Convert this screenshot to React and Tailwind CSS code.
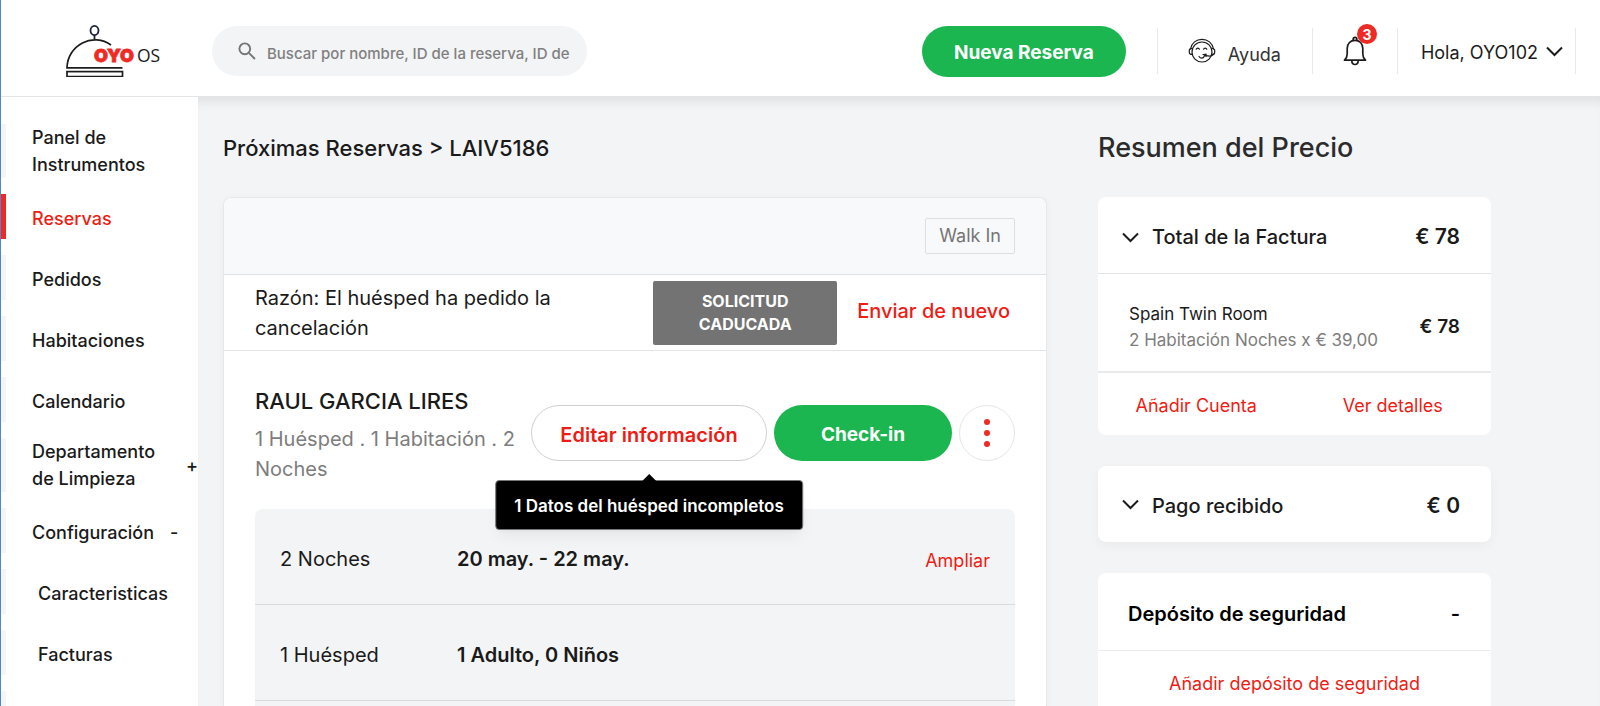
import React from "react";

const NAV_ITEMS = [
  { label: "Panel de Instrumentos", narrow: true },
  { label: "Reservas", active: true },
  { label: "Pedidos" },
  { label: "Habitaciones" },
  { label: "Calendario" },
  { label: "Departamento de Limpieza", narrow: true, toggle: "+" },
  { label: "Configuración", toggle: "-" },
  { label: "Caracteristicas", nested: true },
  { label: "Facturas", nested: true },
];

function Logo() {
  return (
    <svg width="96" height="56" viewBox="0 0 96 56" fill="none" role="img" aria-label="OYO OS">
      <ellipse cx="29.5" cy="9.5" rx="4" ry="4.6" stroke="#1b1f3a" strokeWidth="1.8" />
      <path d="M29.5 14v4" stroke="#1b1f3a" strokeWidth="1.8" />
      <path d="M57.500 46.800H2V46.500A28 28.500 0 0 1 46 24" stroke="#1c1c1c" strokeWidth="1.7" />
      <rect x="2" y="50.600" width="55.500" height="5" stroke="#1c1c1c" strokeWidth="1.7" />
      <text x="29" y="41" fill="#ee2a24" stroke="#ee2a24" strokeWidth="0.8" fontFamily="Inter, sans-serif" fontSize="18" fontWeight="900">OYO</text>
      <text x="72" y="41" fill="#1c1c1c" fontFamily='"Open Sans", sans-serif' fontSize="17.500">OS</text>
    </svg>
  );
}

function SearchIcon() {
  return (
    <svg width="18" height="18" viewBox="0 0 18 18" fill="none" stroke="#757575" strokeWidth="1.9" aria-hidden="true">
      <circle cx="6.800" cy="6.800" r="5.400" />
      <path d="M10.800 10.800L17 17" />
    </svg>
  );
}

function SupportIcon() {
  return (
    <svg width="28" height="26" viewBox="0 0 28 26" fill="none" stroke="#1c1c1c" strokeWidth="1.200" strokeLinecap="round" aria-hidden="true">
      <circle cx="14" cy="14" r="10" />
      <path d="M2.500 11C3.600 5 8.300 1.300 14 1.300S24.400 5 25.500 11" />
      <path d="M3.800 10.500C2 10.500 1.300 11.300 1.300 12.600v1.600c0 1.300.7 2.200 2.500 2.200M24.200 10.500c1.800 0 2.500.8 2.500 2.100v1.600c0 1.300-.7 2.200-2.500 2.200" />
      <path d="M8.200 11.200c.5-1.500 2.700-1.500 3.200 0M15.600 11.200c.5-1.500 2.700-1.500 3.200 0" />
      <path d="M11 18.500c1.400 2.300 4.300 2.200 5.300-.2M26 16c-1.400 2.200-4.600 2.400-8 1.600" />
      <path d="M15.600 16.600l2.400-.3v1.900z" fill="#1c1c1c" />
    </svg>
  );
}

function BellIcon() {
  return (
    <svg width="24" height="30" viewBox="0 0 24 30" fill="none" stroke="#1c1c1c" strokeWidth="1.700" strokeLinejoin="round" aria-hidden="true">
      <path d="M10.200 4.200V3c0-2.300 3.600-2.300 3.600 0v1.200" />
      <path d="M1.500 24.200c1.900-1.800 2.700-3.200 2.700-6.200v-5.500C4.200 7.500 7.500 4.300 12 4.300s7.800 3.200 7.800 8.200V18c0 3 .8 4.400 2.700 6.200z" />
      <path d="M8.800 24.500c0 5.300 6.400 5.300 6.400 0" />
    </svg>
  );
}

function Chevron() {
  return (
    <svg width="17" height="11" viewBox="0 0 17 11" fill="none" stroke="#1c1c1c" strokeWidth="2" aria-hidden="true">
      <path d="M1 1.500L8.500 9 16 1.500" />
    </svg>
  );
}

function Header() {
  return (
    <header className="flex h-[97px] items-center border-b border-[#e3e4e6] bg-white pt-1.5">
      <a href="#inicio" className="ml-16 shrink-0 pb-1">
        <Logo />
      </a>
      <label className="ml-[51px] flex h-[50px] w-[375px] items-center gap-[11px] rounded-full bg-[#f3f4f6] pr-2 pl-[26px]">
        <SearchIcon />
        <span className="sr-only">Buscar reservas</span>
        <input
          type="text"
          placeholder="Buscar por nombre, ID de la reserva, ID de"
          className="h-10 min-w-0 flex-1 bg-transparent pt-1 text-[15px] font-medium text-[#1c1c1c] outline-none placeholder:text-[#808080]"
        />
      </label>
      <button type="button" className="ml-auto h-[51px] w-[204px] rounded-full bg-[#1bb650] pt-1 text-[19px] font-bold text-white">
        Nueva Reserva
      </button>
      <div className="mr-6 ml-[31px] flex h-[46px] items-stretch divide-x divide-[#e8e8ea] border-x border-[#e8e8ea]">
        <a href="#ayuda" className="flex items-center gap-3 pr-[31px] pl-[30px] text-[18px] text-[#333]">
          <SupportIcon />
          <span className="pt-1.5">Ayuda</span>
        </a>
        <button type="button" aria-label="Notificaciones" className="flex w-[85px] items-center justify-center">
          <span className="relative">
            <BellIcon />
            <span className="absolute -top-3 left-3.5 flex size-5 items-center justify-center rounded-full bg-[#ee2a24] text-[14px] font-bold text-white">
              3
            </span>
          </span>
        </button>
        <button type="button" className="flex items-center gap-2 pr-3 pl-[23px] text-[18px] text-[#1c1c1c]">
          <span className="pt-0.5">Hola, OYO102</span>
          <Chevron />
        </button>
      </div>
    </header>
  );
}

function Sidebar() {
  return (
    <nav className="flex w-[197px] shrink-0 flex-col bg-white pt-[27px]">
      <ul className="flex flex-1 flex-col gap-4">
        {NAV_ITEMS.map((item) => (
          <li
            key={item.label}
            className={`flex min-h-[45px] items-center border-l-[5px] text-[18px] leading-[27px] font-medium ${
              item.active ? "border-[#ee2a24] text-[#ee1c14]" : "border-[#f4f5f7] text-[#1a1a1a]"
            }`}
          >
            <a href="#menu" className={`${item.nested ? "pl-8" : "pl-[26px]"} ${item.narrow ? "w-[156px]" : "pt-1"}`}>
              {item.label}
            </a>
            {item.toggle && (
              <button type="button" aria-label={`Desplegar ${item.label}`} className={item.toggle === "+" ? "ml-auto" : "ml-4 pt-1"}>
                {item.toggle}
              </button>
            )}
          </li>
        ))}
        <li className="flex-1 border-l-[5px] border-[#f4f5f7]" />
      </ul>
    </nav>
  );
}

function DetailRow({ label, value, action }) {
  return (
    <div className="flex h-24 items-center border-b border-[#d9dadd] px-[25px] pt-1 text-[20px]">
      <span className="w-[177px]">{label}</span>
      <span className="font-semibold">{value}</span>
      {action && (
        <a href="#ampliar" className="ml-auto pt-1 text-[18px] text-[#ee1c14]">
          {action}
        </a>
      )}
    </div>
  );
}

function Booking() {
  return (
    <section className="flex min-w-0 flex-1 flex-col">
      <h1 className="mb-[34px] text-[22px] leading-[30px] font-medium">Próximas Reservas &gt; LAIV5186</h1>
      <div className="flex flex-1 flex-col rounded-t-lg border border-b-0 border-[#e6e7e9] bg-white shadow-[0_2px_10px_rgba(0,0,0,0.03)]">
        <div className="flex h-[77px] items-center justify-end rounded-t-lg border-b border-[#dfe1e3] bg-[#f8f9fb] pr-[31px]">
          <span className="rounded-xs border border-[#dddfe1] px-[13px] py-1 text-[18px] leading-[26px] text-[#757575]">Walk In</span>
        </div>
        <div className="flex min-h-[76px] items-center border-b border-[#e3e4e6] pr-9 pl-[31px]">
          <p className="flex-1 text-[20px] leading-[30px]">Razón: El huésped ha pedido la cancelación</p>
          <span className="w-[184px] rounded-xs bg-[#737373] px-9 py-[9px] text-center text-[16px] leading-[23px] font-bold text-white">
            SOLICITUD CADUCADA
          </span>
          <a href="#enviar" className="ml-5 pb-1 text-[20px] font-medium text-[#ee1c14]">
            Enviar de nuevo
          </a>
        </div>
        <div className="flex items-start px-[31px] pt-[35px]">
          <div className="min-w-0 flex-1">
            <h2 className="mb-2 text-[22px] leading-[30px] font-medium">RAUL GARCIA LIRES</h2>
            <p className="text-[20px] leading-[30px] text-[#7d7d7d]">1 Huésped . 1 Habitación . 2 Noches</p>
          </div>
          <div className="mt-[19px] flex gap-[7px]">
            <div className="relative">
              <button
                type="button"
                aria-describedby="guest-tip"
                className="h-14 w-[236px] rounded-full border border-[#cfcfcf] bg-white pt-1 text-[20px] font-semibold text-[#ee1c14]"
              >
                Editar información
              </button>
              <div
                id="guest-tip"
                role="tooltip"
                className="absolute top-[75px] left-1/2 -translate-x-1/2 rounded-sm border border-[#777] bg-black px-[18px] pt-3 pb-2.5 text-[17px] leading-[26px] font-semibold whitespace-nowrap text-white shadow-lg shadow-black/5"
              >
                <svg className="absolute -top-[7px] left-1/2 -translate-x-1/2" width="14" height="7" viewBox="0 0 14 7" aria-hidden="true">
                  <path d="M0 7L7 0l7 7z" fill="#000" />
                </svg>
                1 Datos del huésped incompletos
              </div>
            </div>
            <button type="button" className="h-14 w-[178px] rounded-full bg-[#1bb650] pt-1 text-[19px] font-bold text-white">
              Check-in
            </button>
            <button type="button" aria-label="Más opciones" className="flex size-14 flex-col items-center justify-center gap-[5px] rounded-full border border-[#e6e6e6] bg-white">
              <span className="size-1.5 rounded-full bg-[#ee2a24]" />
              <span className="size-1.5 rounded-full bg-[#ee2a24]" />
              <span className="size-1.5 rounded-full bg-[#ee2a24]" />
            </button>
          </div>
        </div>
        <div className="mx-[31px] mt-[25px] flex-1 rounded-t-lg bg-[#f3f4f6]">
          <DetailRow label="2 Noches" value="20 may. - 22 may." action="Ampliar" />
          <DetailRow label="1 Huésped" value="1 Adulto, 0 Niños" />
        </div>
      </div>
    </section>
  );
}

function PriceSummary() {
  return (
    <aside className="flex w-[393px] shrink-0 flex-col">
      <h2 className="mb-[34px] text-[27px] leading-[30px] font-medium text-[#2b2b2b]">Resumen del Precio</h2>

      <div className="mb-[31px] rounded-lg bg-white">
        <div className="flex h-[77px] items-center border-b border-[#e3e4e6] pt-1 pr-[31px] pl-6 text-[20px] font-medium">
          <Chevron />
          <h3 className="pl-[13px]">Total de la Factura</h3>
          <span className="ml-auto text-[21px] font-semibold">€ 78</span>
        </div>
        <div className="flex items-center border-b-2 border-[#e9eaec] pt-[27px] pr-[31px] pb-[18px] pl-[31px]">
          <div className="text-[17px] leading-[26px]">
            <p>Spain Twin Room</p>
            <p className="text-[#7d7d7d]">2 Habitación Noches x € 39,00</p>
          </div>
          <span className="ml-auto text-[19px] font-semibold">€ 78</span>
        </div>
        <div className="grid h-[62px] grid-cols-2 items-center pt-0.5 text-center text-[18px] text-[#ee1c14]">
          <a href="#cuenta">Añadir Cuenta</a>
          <a href="#detalles">Ver detalles</a>
        </div>
      </div>

      <div className="mb-[31px] flex h-[76px] items-center rounded-lg bg-white pr-[31px] pl-6 text-[20px] font-medium shadow-[0_4px_12px_rgba(0,0,0,0.04)]">
        <Chevron />
        <h3 className="pt-1 pl-[13px]">Pago recibido</h3>
        <span className="ml-auto pt-1 text-[21px] font-semibold">€ 0</span>
      </div>

      <div className="flex-1 rounded-t-lg bg-white">
        <div className="flex h-[78px] items-center border-b border-[#ececee] pt-1 pr-[31px] pl-[30px] text-[20px] font-semibold text-black">
          <h3>Depósito de seguridad</h3>
          <span className="ml-auto">-</span>
        </div>
        <div className="pt-5 text-center text-[18px] leading-[26px] text-[#ee1c14]">
          <a href="#deposito">Añadir depósito de seguridad</a>
        </div>
      </div>
    </aside>
  );
}

export default function App() {
  return (
    <div className="flex min-h-screen flex-col border-l border-[#4a86d9] bg-white font-['Inter',sans-serif] text-[#1a1a1a]">
      <Header />
      <div className="flex flex-1">
        <Sidebar />
        <main className="flex min-w-0 flex-1 gap-[51px] bg-[#f3f4f6] pt-9 pr-[109px] pl-[25px] shadow-[inset_0_12px_12px_-8px_rgba(0,0,0,0.09)]">
          <Booking />
          <PriceSummary />
        </main>
      </div>
    </div>
  );
}
